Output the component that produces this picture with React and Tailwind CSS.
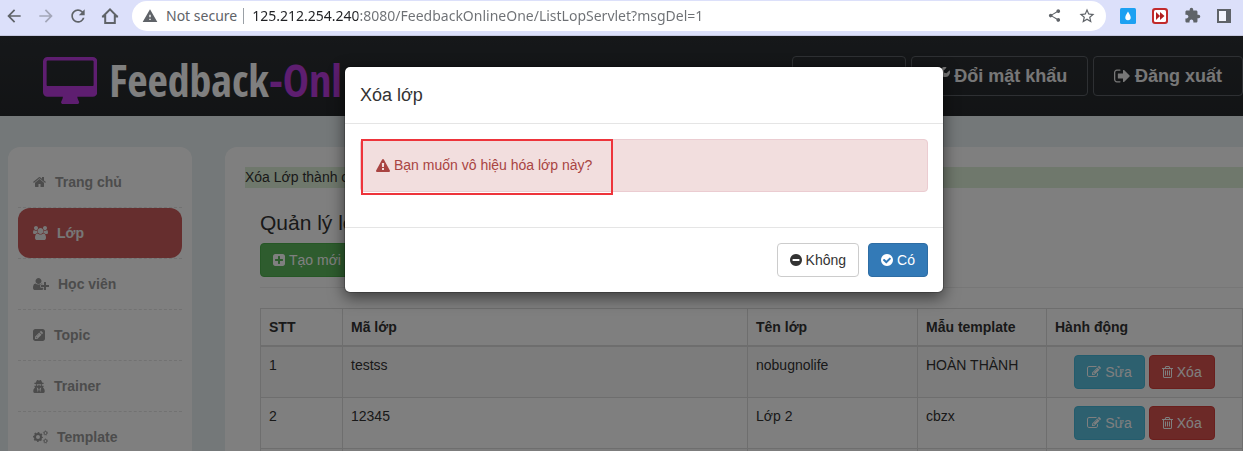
import React from "react";
import {
  MdArrowBack,
  MdArrowForward,
  MdRefresh,
  MdWarning,
  MdShare,
  MdStarBorder,
  MdExtension,
} from "react-icons/md";
import { FaUserSecret, FaWrench } from "react-icons/fa";

/* ---------- Icons ---------- */

const CIRCLE =
  "q0 209-103 385.5t-279.5 279.5-385.5 103-385.5-103-279.5-279.5-103-385.5 103-385.5 279.5-279.5 385.5-103 385.5 103 279.5 279.5 103 385.5z";

const icons = {
  desktop: {
    box: "-64 0 1920 1664",
    d: "M1728 992v-832q0-13-9.5-22.5t-22.5-9.5h-1600q-13 0-22.5 9.5t-9.5 22.5v832q0 13 9.5 22.5t22.5 9.5h1600q13 0 22.5-9.5t9.5-22.5zm128-832v1088q0 66-47 113t-113 47h-544q0 37 16 77.5t32 71 16 43.5q0 26-19 45t-45 19h-512q-26 0-45-19t-19-45q0-14 16-44t32-70 16-78h-544q-66 0-113-47t-47-113v-1088q0-66 47-113t113-47h1600q66 0 113 47t47 113z",
  },
  home: {
    box: "64 0 1664 1792",
    d: "M1472 992v480q0 26-19 45t-45 19h-384v-384h-256v384h-384q-26 0-45-19t-19-45v-480q0-1 .5-3t.5-3l575-474 575 474q1 2 1 6zm223-69l-62 74q-8 9-21 11h-3q-13 0-21-7l-692-577-692 577q-12 8-24 7-13-2-21-11l-62-74q-8-10-7-23.5t11-21.5l719-599q32-26 76-26t76 26l244 204v-195q0-14 9-23t23-9h192q14 0 23 9t9 23v408l219 182q10 8 11 21.5t-7 23.5z",
  },
  users: {
    box: "-64 0 1920 1792",
    d: "M529 896q-162 5-265 128h-134q-82 0-138-40.5t-56-118.5q0-353 124-353 6 0 43.5 21t97.5 42.5 119 21.5q67 0 133-23-5 37-5 66 0 139 81 256zm1071 637q0 120-73 189.5t-194 69.5h-874q-121 0-194-69.5t-73-189.5q0-53 3.5-103.5t14-109 26.5-108.5 43-97.5 62-81 85.5-53.5 111.5-20q10 0 43 21.5t73 48 107 48 135 21.5 135-21.5 107-48 73-48 43-21.5q61 0 111.5 20t85.5 53.5 62 81 43 97.5 26.5 108.5 14 109 3.5 103.5zm-1024-1277q0 106-75 181t-181 75-181-75-75-181 75-181 181-75 181 75 75 181zm704 384q0 159-112.5 271.5t-271.5 112.5-271.5-112.5-112.5-271.5 112.5-271.5 271.5-112.5 271.5 112.5 112.5 271.5zm576 225q0 78-56 118.5t-138 40.5h-134q-103-123-265-128 81-117 81-256 0-29-5-66 66 23 133 23 59 0 119-21.5t97.5-42.5 43.5-21q124 0 124 353zm-128-609q0 106-75 181t-181 75-181-75-75-181 75-181 181-75 181 75 75 181z",
  },
  userPlus: {
    box: "0 0 2048 1792",
    d: "M704 896q-159 0-271.5-112.5t-112.5-271.5 112.5-271.5 271.5-112.5 271.5 112.5 112.5 271.5-112.5 271.5-271.5 112.5zm960 128h352q13 0 22.5 9.5t9.5 22.5v192q0 13-9.5 22.5t-22.5 9.5h-352v352q0 13-9.5 22.5t-22.5 9.5h-192q-13 0-22.5-9.5t-9.5-22.5v-352h-352q-13 0-22.5-9.5t-9.5-22.5v-192q0-13 9.5-22.5t22.5-9.5h352v-352q0-13 9.5-22.5t22.5-9.5h192q13 0 22.5 9.5t9.5 22.5v352zm-736 224q0 52 38 90t90 38h256v238q-68 50-171 50h-874q-121 0-194-69t-73-190q0-53 3.5-103.5t14-109 26.5-108.5 43-97.5 62-81 85.5-53.5 111.5-20q19 0 39 17 79 61 154.5 91.5t164.5 30.5 164.5-30.5 154.5-91.5q20-17 39-17 132 0 217 96h-223q-52 0-90 38t-38 90v192z",
  },
  penSquare: {
    box: "0 -128 1536 1792",
    d: "M404 980l152 152-52 52h-56v-96h-96v-56zm414-390q14 13-3 30l-291 291q-17 17-30 3-14-13 3-30l291-291q17-17 30-3zm-274 690l544-544-288-288-544 544v288h288zm608-608l92-92q28-28 28-68t-28-68l-152-152q-28-28-68-28t-68 28l-92 92zm384-384v960q0 119-84.5 203.5t-203.5 84.5h-960q-119 0-203.5-84.5t-84.5-203.5v-960q0-119 84.5-203.5t203.5-84.5h960q119 0 203.5 84.5t84.5 203.5z",
  },
  signOut: {
    box: "64 0 1664 1792",
    d: "M704 1440q0 4 1 20t.5 26.5-3 23.5-10 19.5-20.5 6.5h-320q-119 0-203.5-84.5t-84.5-203.5v-704q0-119 84.5-203.5t203.5-84.5h320q13 0 22.5 9.5t9.5 22.5q0 4 1 20t.5 26.5-3 23.5-10 19.5-20.5 6.5h-320q-66 0-113 47t-47 113v704q0 66 47 113t113 47h312l11.5 1 11.5 3 8 5.5 7 9 2 13.5zm928-544q0 26-19 45l-544 544q-19 19-45 19t-45-19-19-45v-288h-448q-26 0-45-19t-19-45v-384q0-26 19-45t45-19h448v-288q0-26 19-45t45-19 45 19l544 544q19 19 19 45z",
  },
  edit: {
    box: "0 0 1792 1792",
    d: "M888 1184l116-116-152-152-116 116v56h96v96h56zm440-720q-16-16-33 1l-350 350q-17 17-1 33t33-1l350-350q17-17 1-33zm80 594v190q0 119-84.5 203.5t-203.5 84.5h-832q-119 0-203.5-84.5t-84.5-203.5v-832q0-119 84.5-203.5t203.5-84.5h832q63 0 117 25 15 7 18 23 3 17-9 29l-49 49q-14 14-32 8-23-6-45-6h-832q-66 0-113 47t-47 113v832q0 66 47 113t113 47h832q66 0 113-47t47-113v-126q0-13 9-22l64-64q15-15 35-7t20 29zm-96-738l288 288-672 672h-288v-288zm444 132l-92 92-288-288 92-92q28-28 68-28t68 28l152 152q28 28 28 68t-28 68z",
  },
  trash: {
    box: "192 0 1408 1792",
    d: "M704 736v576q0 14-9 23t-23 9h-64q-14 0-23-9t-9-23v-576q0-14 9-23t23-9h64q14 0 23 9t9 23zm256 0v576q0 14-9 23t-23 9h-64q-14 0-23-9t-9-23v-576q0-14 9-23t23-9h64q14 0 23 9t9 23zm256 0v576q0 14-9 23t-23 9h-64q-14 0-23-9t-9-23v-576q0-14 9-23t23-9h64q14 0 23 9t9 23zm128 724v-948h-896v948q0 22 7 40.5t14.5 27 10.5 8.5h832q3 0 10.5-8.5t14.5-27 7-40.5zm-672-1076h448l-48-117q-7-9-17-11h-317q-10 2-17 11zm928 32v64q0 14-9 23t-23 9h-96v948q0 83-47 143.5t-113 60.5h-832q-66 0-113-58.5t-47-141.5v-952h-96q-14 0-23-9t-9-23v-64q0-14 9-23t23-9h309l70-167q15-37 54-63t79-26h320q40 0 79 26t54 63l70 167h309q14 0 23 9t9 23z",
  },
  plusSquare: {
    box: "128 0 1536 1792",
    d: "M1408 960v-128q0-26-19-45t-45-19h-320v-320q0-26-19-45t-45-19h-128q-26 0-45 19t-19 45v320h-320q-26 0-45 19t-19 45v128q0 26 19 45t45 19h320v320q0 26 19 45t45 19h128q26 0 45-19t19-45v-320h320q26 0 45-19t19-45zm256-544v960q0 119-84.5 203.5t-203.5 84.5h-960q-119 0-203.5-84.5t-84.5-203.5v-960q0-119 84.5-203.5t203.5-84.5h960q119 0 203.5 84.5t84.5 203.5z",
  },
  minusCircle: {
    box: "128 0 1536 1792",
    d:
      "M1344 960v-128q0-26-19-45t-45-19h-768q-26 0-45 19t-19 45v128q0 26 19 45t45 19h768q26 0 45-19t19-45zm320-64" +
      CIRCLE,
  },
  checkCircle: {
    box: "128 0 1536 1792",
    d:
      "M1412 734q0-28-18-46l-91-90q-19-19-45-19t-45 19l-408 407-226-226q-19-19-45-19t-45 19l-91 90q-18 18-18 46 0 27 18 45l362 362q19 19 45 19 27 0 46-19l543-543q18-18 18-45zm252 162" +
      CIRCLE,
  },
  warning: {
    box: "0 0 1792 1792",
    d: "M1024 1375v-190q0-14-9.5-23.5t-22.5-9.5h-192q-13 0-22.5 9.5t-9.5 23.5v190q0 14 9.5 23.5t22.5 9.5h192q13 0 22.5-9.5t9.5-23.5zm-2-374l18-459q0-12-10-19-13-11-24-11h-220q-11 0-24 11-10 7-10 21l17 457q0 10 10 16.5t24 6.5h185q14 0 23.5-6.5t10.5-16.5zm-14-934l768 1408q35 63-2 126-17 29-46.5 46t-63.5 17h-1536q-34 0-63.5-17t-46.5-46q-37-63-2-126l768-1408q17-31 47-49t65-18 65 18 47 49z",
  },
};

function Icon({ name, className = "h-3.5" }) {
  const { box, d } = icons[name];
  return (
    <svg
      viewBox={box}
      fill="currentColor"
      aria-hidden="true"
      className={`w-auto shrink-0 ${className}`}
    >
      <path d={d} />
    </svg>
  );
}

/* One large gear with two small ones; the dashed rings are the teeth. */
function GearsIcon() {
  return (
    <svg
      viewBox="0 0 1920 1792"
      fill="none"
      stroke="currentColor"
      aria-hidden="true"
      className="h-3.5 w-[15px] shrink-0"
    >
      <circle cx="640" cy="896" r="385" strokeWidth="260" />
      <circle cx="640" cy="896" r="560" strokeWidth="150" strokeDasharray="220 220" strokeDashoffset="110" />
      <circle cx="1600" cy="384" r="190" strokeWidth="125" />
      <circle cx="1600" cy="384" r="280" strokeWidth="80" strokeDasharray="147 147" strokeDashoffset="73" />
      <circle cx="1600" cy="1408" r="190" strokeWidth="125" />
      <circle cx="1600" cy="1408" r="280" strokeWidth="80" strokeDasharray="147 147" strokeDashoffset="73" />
    </svg>
  );
}

/* ---------- Browser toolbar ---------- */

function BrowserBar() {
  return (
    <div className="flex h-9 shrink-0 items-center border-b border-[#c5c8e0] bg-[#dce0fa] pb-1 pl-1 text-[#5f6368]">
      <div className="flex items-center gap-3">
        <button type="button" aria-label="Back">
          <MdArrowBack size={20} />
        </button>
        <button type="button" aria-label="Forward" className="text-[#a3a6b8]">
          <MdArrowForward size={20} />
        </button>
        <button type="button" aria-label="Reload">
          <MdRefresh size={20} />
        </button>
        <button type="button" aria-label="Home">
          <svg width="20" height="20" viewBox="0 0 20 20" fill="none" stroke="currentColor" strokeWidth="2">
            <path d="M3.2 10.2 10 3.4l6.8 6.8M5.2 9v8h9.6V9M1.9 10.6h3.3M14.8 10.6h3.3" />
          </svg>
        </button>
      </div>
      <div className="ml-3 flex h-[30px] flex-1 items-center rounded-full bg-white pr-2.5 pl-2.5 font-['Noto_Sans',sans-serif] text-sm">
        <MdWarning size={16} className="shrink-0" />
        <span className="ml-2 whitespace-nowrap">Not secure</span>
        <span className="mr-2 ml-1.5 h-4 w-px bg-[#9aa0a6]" />
        <input
          type="text"
          aria-label="Address"
          readOnly
          value="125.212.254.240:8080/FeedbackOnlineOne/ListLopServlet?msgDel=1"
          className="min-w-0 flex-1 bg-linear-to-r from-[#202124] from-[106px] to-[#6d7074] to-[106px] bg-clip-text text-transparent outline-none"
        />
        <div className="flex items-center gap-4">
          <button type="button" aria-label="Share">
            <MdShare size={15} />
          </button>
          <button type="button" aria-label="Bookmark">
            <MdStarBorder size={18} />
          </button>
        </div>
      </div>
      <div className="ml-3.5 flex items-center gap-4 pr-3">
        <button type="button" aria-label="Drop extension">
          <svg width="16" height="16" viewBox="0 0 16 16">
            <rect width="16" height="16" rx="1.5" fill="#1da1f2" />
            <path d="M8 3.500C9 5.600 10.700 7.200 10.700 9.500a2.700 2.700 0 0 1-5.400 0C5.300 7.200 7 5.600 8 3.500z" fill="#fff" />
          </svg>
        </button>
        <button type="button" aria-label="Skip extension">
          <svg width="16" height="16" viewBox="0 0 16 16">
            <rect width="16" height="16" rx="3" fill="#c22b2b" />
            <rect x="2" y="2" width="12" height="12" rx="1.500" fill="#fff" />
            <path d="M4 4l4 4-4 4zM8 4l4.500 4L8 12z" fill="#b01e1e" />
          </svg>
        </button>
        <button type="button" aria-label="Extensions">
          <MdExtension size={17} />
        </button>
        <button type="button" aria-label="Side panel">
          <svg width="14" height="14" viewBox="0 0 14 14" fill="none">
            <rect x="1" y="1" width="12" height="12" stroke="currentColor" strokeWidth="2" fill="#f4f5fd" />
            <rect x="9" y="1" width="4" height="12" fill="currentColor" />
          </svg>
        </button>
      </div>
    </div>
  );
}

/* ---------- Site header ---------- */

const navButton =
  "flex h-10 items-center gap-1 rounded-sm border border-[#5c6166] px-5 text-lg font-bold whitespace-nowrap text-[#eeeeee]";

function Header() {
  return (
    <header className="flex h-20 items-center justify-between bg-linear-to-b from-[#2c3034] to-[#25282b] pl-[43px]">
      <a href="#home" className="flex items-center gap-3 pt-2 text-[44px] leading-none">
        <Icon name="desktop" className="h-[47px] text-[#bc3ce0]" />
        <span className="font-['Liberation_Sans_Narrow','Open_Sans_Condensed','Liberation_Sans',sans-serif] font-bold whitespace-nowrap text-white">
          Feedback<span className="text-[#bc3ce0]">-Onl</span>
        </span>
      </a>
      <nav className="flex gap-[5px]">
        <button type="button" aria-label="Tài khoản" className={`${navButton} w-[114px]`} />
        <button type="button" className={navButton}>
          <FaWrench size={18} />
          Đổi mật khẩu
        </button>
        <button type="button" className={navButton}>
          <Icon name="signOut" className="h-[18px]" />
          Đăng xuất
        </button>
      </nav>
    </header>
  );
}

/* ---------- Sidebar ---------- */

const menu = [
  { label: "Trang chủ", icon: <Icon name="home" /> },
  { label: "Lớp", icon: <Icon name="users" />, active: true },
  { label: "Học viên", icon: <Icon name="userPlus" /> },
  { label: "Topic", icon: <Icon name="penSquare" /> },
  { label: "Trainer", icon: <FaUserSecret className="h-[13px] w-3" /> },
  { label: "Template", icon: <GearsIcon /> },
];

function Sidebar() {
  return (
    <aside className="w-[184px] shrink-0 rounded-t-xl bg-white p-2.5">
      <ul>
        {menu.map((item) => (
          <li key={item.label} className="border-b border-dashed border-[#e5e5e5]">
            <a
              href="#menu"
              className={`flex h-[50px] items-center gap-[9px] rounded-xl px-[15px] font-bold ${
                item.active ? "bg-[#cd5c5c] text-[#eeeeee]" : "text-[#999999]"
              }`}
            >
              {item.icon}
              {item.label}
            </a>
          </li>
        ))}
      </ul>
    </aside>
  );
}

/* ---------- Class list ---------- */

const button =
  "inline-flex h-[34px] items-center gap-1 rounded-sm border px-3 whitespace-nowrap";

const rows = [
  { no: 1, code: "testss", name: "nobugnolife", template: "HOÀN THÀNH" },
  { no: 2, code: "12345", name: "Lớp 2", template: "cbzx" },
];

const cell = "border border-[#dddddd] p-2 text-left align-top";

function ClassList() {
  return (
    <main className="min-w-0 flex-1 rounded-tl-xl bg-white pt-5 pl-5">
      <p className="h-[21px] bg-[#dff0d8] leading-[21px]">Xóa Lớp thành công</p>
      <section className="pt-5 pl-[15px]">
        <h1 className="mb-[5px] text-[21px] leading-[30px]">Quản lý lớp</h1>
        <button type="button" className={`${button} border-[#4cae4c] bg-[#5cb85c] text-white`}>
          <Icon name="plusSquare" />
          Tạo mới
        </button>
        <hr className="mt-2.5 mb-5 border-[#eeeeee]" />
        <table className="w-full table-fixed border-collapse">
          <colgroup>
            <col className="w-[82px]" />
            <col />
            <col className="w-[170px]" />
            <col className="w-[129px]" />
            <col className="w-[196px]" />
          </colgroup>
          <thead>
            <tr>
              {["STT", "Mã lớp", "Tên lớp", "Mẫu template", "Hành động"].map((title) => (
                <th key={title} className={`${cell} border-b-2 font-bold`}>
                  {title}
                </th>
              ))}
            </tr>
          </thead>
          <tbody>
            {rows.map((row) => (
              <tr key={row.no} className="odd:bg-[#f9f9f9]">
                <td className={cell}>{row.no}</td>
                <td className={cell}>{row.code}</td>
                <td className={cell}>{row.name}</td>
                <td className={cell}>{row.template}</td>
                <td className={cell}>
                  <div className="flex justify-center gap-1">
                    <button type="button" className={`${button} border-[#46b8da] bg-[#5bc0de] text-white`}>
                      <Icon name="edit" />
                      Sửa
                    </button>
                    <button type="button" className={`${button} border-[#d43f3a] bg-[#d9534f] text-white`}>
                      <Icon name="trash" />
                      Xóa
                    </button>
                  </div>
                </td>
              </tr>
            ))}
            <tr className="h-[51px] bg-[#f9f9f9]">
              <td className={cell} />
              <td className={cell} />
              <td className={cell} />
              <td className={cell} />
              <td className={cell} />
            </tr>
          </tbody>
        </table>
      </section>
    </main>
  );
}

/* ---------- Confirmation dialog ---------- */

function ConfirmDialog() {
  return (
    <div className="absolute inset-0 flex items-start justify-center bg-black/50 pt-[30px] pl-[45px]">
      <div
        role="dialog"
        aria-modal="true"
        aria-labelledby="dialog-title"
        className="w-[600px] rounded-md border border-black/20 bg-white bg-clip-padding shadow-[0_5px_15px_rgba(0,0,0,0.5)]"
      >
        <div className="border-b border-[#e5e5e5] p-[15px]">
          <h2 id="dialog-title" className="text-lg leading-[26px]">
            Xóa lớp
          </h2>
        </div>
        <div className="px-[15px] pt-[15px] pb-[35px]">
          <div className="relative flex items-center gap-1 rounded-sm border border-[#ebccd1] bg-[#f2dede] p-[15px] leading-[21px] text-[#a94442]">
            <Icon name="warning" />
            Bạn muốn vô hiệu hóa lớp này?
            <span className="absolute -top-px left-0 h-14 w-[252px] border-2 border-[#ee343b]" />
          </div>
        </div>
        <div className="flex justify-end gap-[9px] border-t border-[#e5e5e5] p-[15px]">
          <button type="button" className={`${button} border-[#cccccc] bg-white`}>
            <Icon name="minusCircle" />
            Không
          </button>
          <button type="button" className={`${button} border-[#2e6da4] bg-[#337ab7] text-white`}>
            <Icon name="checkCircle" />
            Có
          </button>
        </div>
      </div>
    </div>
  );
}

export default function App() {
  return (
    <div className="flex h-screen flex-col font-['Liberation_Sans',Arial,sans-serif] text-sm text-[#333333]">
      <BrowserBar />
      <div className="relative min-h-0 flex-1 overflow-hidden bg-[#e8f0f2]">
        <Header />
        <div className="flex gap-[33px] pt-[31px] pl-2">
          <Sidebar />
          <ClassList />
        </div>
        <ConfirmDialog />
      </div>
    </div>
  );
}
